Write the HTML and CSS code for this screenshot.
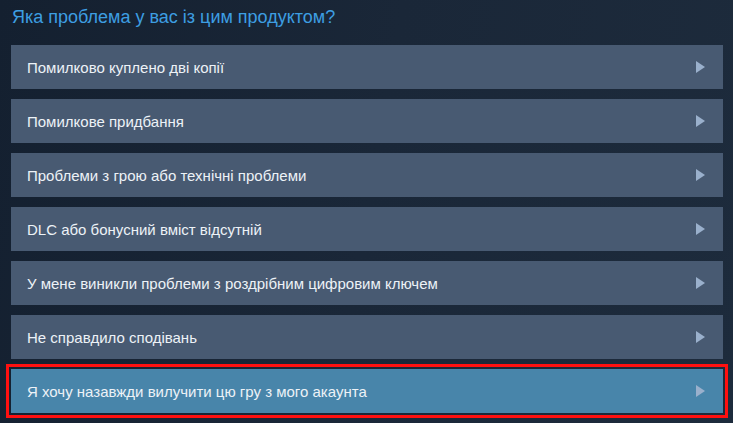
FILE: index.html
```html
<!DOCTYPE html>
<html lang="uk">
<head>
<meta charset="utf-8">
<link rel="stylesheet" href="styles.css">
</head>
<body>
<div class="page">
  <h2 class="title">Яка проблема у вас із цим продуктом?</h2>
  <div class="list">
    <a class="row"><span>Помилково куплено дві копії</span><i class="arrow"></i></a>
    <a class="row"><span>Помилкове придбання</span><i class="arrow"></i></a>
    <a class="row"><span>Проблеми з грою або технічні проблеми</span><i class="arrow"></i></a>
    <a class="row"><span>DLC або бонусний вміст відсутній</span><i class="arrow"></i></a>
    <a class="row"><span>У мене виникли проблеми з роздрібним цифровим ключем</span><i class="arrow"></i></a>
    <a class="row"><span>Не справдило сподівань</span><i class="arrow"></i></a>
    <a class="row active"><span>Я хочу назавжди вилучити цю гру з мого акаунта</span><i class="arrow"></i></a>
  </div>
</div>
</body>
</html>
```
FILE: styles.css
```css
html, body {
  margin: 0;
  padding: 0;
  height: 100%;
}
body {
  background: linear-gradient(100deg, #142030 0%, #1a2738 50%, #1d2b3c 100%);
  font-family: "Liberation Sans", Arial, sans-serif;
  overflow: hidden;
}
.page {
  padding: 5px 10px 0 11px;
}
.title {
  margin: 0 0 0 1px;
  height: 40px;
  font-size: 18px;
  font-weight: normal;
  line-height: 24px;
  color: #3d9ee2;
}
.list {
  display: flex;
  flex-direction: column;
  gap: 10px;
}
.row {
  display: flex;
  align-items: center;
  justify-content: space-between;
  height: 44px;
  padding: 0 18px 0 16px;
  background: #485a72;
  color: #edf2f7;
  font-size: 15px;
  cursor: pointer;
}
.row.active {
  background: #4885aa;
  outline: 3px solid #ff1010;
  outline-offset: 2px;
}
.arrow {
  width: 0;
  height: 0;
  border-top: 6px solid transparent;
  border-bottom: 6px solid transparent;
  border-left: 9px solid #9ab0cc;
}
```
